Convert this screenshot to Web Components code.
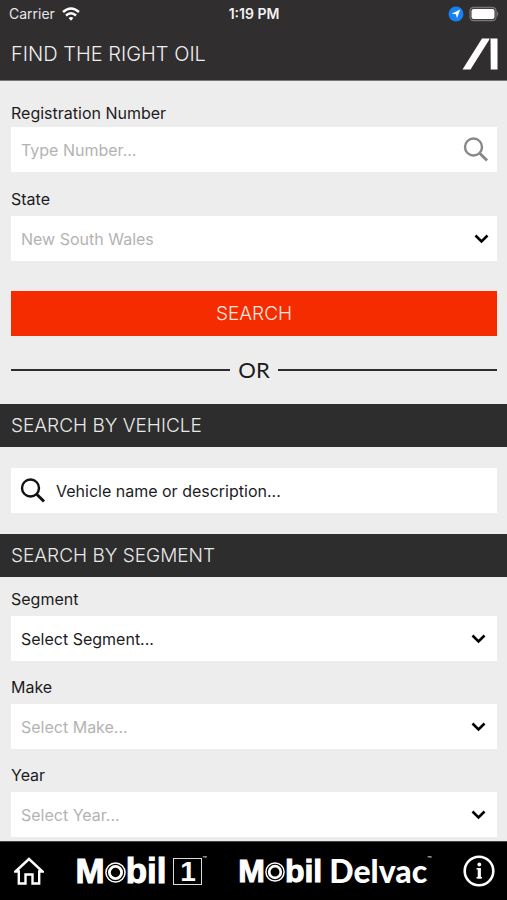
<!DOCTYPE html>
<html lang="en">
<head>
<meta charset="utf-8">
<meta name="viewport" content="width=device-width, initial-scale=1">
<title>Find the right oil</title>
<style>
  body { margin: 0; background: #ededed; color: #1c1c1e; font-family: Inter, "Liberation Sans", sans-serif; font-size: 16px; line-height: 20px; }
</style>
</head>
<body>
<oil-app></oil-app>
<script>
const define = (name, html, setup) => {
  const template = document.createElement('template');
  template.innerHTML = html;
  customElements.define(name, class extends HTMLElement {
    constructor() {
      super();
      this.attachShadow({ mode: 'open' }).append(template.content.cloneNode(true));
    }
    connectedCallback() { if (setup) setup(this, this.shadowRoot); }
  });
};

const lens = `<svg width="26" height="26" viewBox="0 0 26 26" fill="none" stroke="currentColor" aria-hidden="true"><circle cx="10.5" cy="10" r="8.5" stroke-width="2.4"/><path d="M16.7 16.2 L24 23.500" stroke-width="3"/></svg>`;

define('status-bar', `
  <style>
    :host { display: grid; grid-template-columns: 1fr auto 1fr; align-items: center; height: 28px; padding: 0 8px 0 9px; font-size: 14px; color: #e6e6e6; }
    .left, .right { display: flex; align-items: center; gap: 7px; }
    .right { justify-content: flex-end; gap: 5px; }
    time { font-weight: 600; color: #f2f2f2; }
    svg { display: block; }
  </style>
  <span class="left">Carrier
    <svg width="18" height="14" viewBox="0 0 18 14" fill="none" stroke="#fff" stroke-width="2.5" aria-label="Wi-Fi"><path d="M1 5 Q9 -2 17 5"/><path d="M4 8.5 Q9 4 14 8.5"/><path d="M6.6 11 Q9 8.8 11.4 11 L9 13.8Z" fill="#fff" stroke="none"/></svg>
  </span>
  <time>1:19 PM</time>
  <span class="right">
    <svg width="16" height="16" viewBox="0 0 16 16" aria-label="Location"><circle cx="8" cy="8" r="7.5" fill="#1681f5"/><path d="M12.2 3.6 L9 12.2 L7.9 8.2 L3.6 7.7Z" fill="#fff"/></svg>
    <svg width="30" height="16" viewBox="0 0 30 16" aria-label="Battery"><rect x="1" y="1.5" width="26" height="13" rx="3.5" fill="none" stroke="#777" stroke-width="1.3"/><rect x="2.5" y="3" width="23" height="10" rx="2" fill="#fff"/><path d="M28 5.5 Q30.500 8 28 10.500Z" fill="#777"/></svg>
  </span>`);

define('app-header', `
  <style>
    :host { display: block; background: #302e2f; color: #eee; border-bottom: 1px solid #777; }
    .title { display: flex; align-items: center; justify-content: space-between; height: 52px; padding: 0 9px 0 11px; }
    h1 { margin: 0; font-size: 20px; line-height: 24px; font-weight: 300; }
    svg { display: block; }
  </style>
  <status-bar></status-bar>
  <div class="title">
    <h1><slot></slot></h1>
    <svg width="36" height="32" viewBox="0 0 36 32" fill="#fff" aria-label="Logo"><path d="M20 .5 H28 L8.500 31.500 H.500Z M28 .5 H35.500 V31.500 H28.500Z"/><path d="M28 .500V31.500" stroke="#302e2f" stroke-width="1"/></svg>
  </div>`);

define('section-bar', `
  <style>
    :host { display: block; background: #2d2d2d; color: #e8e8e8; padding: 10px 11px 9px; }
    h2 { margin: 0; font-size: 19px; line-height: 24px; font-weight: 300; }
  </style>
  <h2><slot></slot></h2>`);

define('text-field', `
  <style>
    :host { display: flex; flex-direction: column; gap: 4px; }
    .box { display: flex; align-items: center; height: 45px; background: #fff; padding: 0 8px 0 10px; color: #888; gap: 10px; }
    input { flex: 1; min-width: 0; align-self: stretch; border: 0; padding: 0; background: none; font: inherit; color: #1c1c1e; outline-offset: -2px; }
    input::placeholder { color: #b3b3b3; opacity: 1; }
    svg { display: block; }
    :host([leading]) .box { flex-direction: row-reverse; color: #111; padding: 0 9px; }
    :host([leading]) input::placeholder { color: #1c1c1e; }
    :host([leading]) label { display: none; }
  </style>
  <label for="field"></label>
  <div class="box"><input id="field" type="text">${lens}</div>`,
  (host, root) => {
    const input = root.querySelector('input');
    root.querySelector('label').textContent = host.getAttribute('label');
    input.placeholder = host.getAttribute('placeholder');
    if (host.hasAttribute('leading')) input.setAttribute('aria-label', host.getAttribute('label'));
  });

define('select-field', `
  <style>
    :host { display: flex; flex-direction: column; gap: 7px; --end: 11px; }
    .box { display: grid; align-items: center; background: #fff; }
    select, svg { grid-area: 1 / 1; }
    select { appearance: none; width: 100%; height: 45px; border: 0; border-radius: 0; padding: 0 40px 0 10px; background: none; font: inherit; color: #1c1c1e; outline-offset: -2px; }
    :host([muted]) select { color: #b3b3b3; }
    svg { display: block; justify-self: end; margin-right: var(--end); pointer-events: none; }
    :host([wide]) { --end: 8px; }
  </style>
  <label for="choice"></label>
  <div class="box">
    <select id="choice"><option></option></select>
    <svg width="15" height="10" viewBox="0 0 15 10" fill="none" stroke="#000" stroke-width="2.600" aria-hidden="true"><path d="M1.500 1.500 L7.500 7.500 L13.500 1.500"/></svg>
  </div>`,
  (host, root) => {
    root.querySelector('label').textContent = host.getAttribute('label');
    root.querySelector('option').textContent = host.getAttribute('value');
  });

define('action-button', `
  <style>
    :host { display: block; }
    button { display: block; width: 100%; height: 45px; border: 0; padding: 0; background: #f52c00; color: #ffe6df; font: inherit; font-size: 19px; font-weight: 300; cursor: pointer; }
  </style>
  <button type="submit"><slot></slot></button>`);

define('or-divider', `
  <style>
    :host { display: flex; align-items: center; gap: 8px; font-family: Lato, sans-serif; font-size: 22px; line-height: 24px; }
    i { flex: 1; height: 2px; background: #2d2d2d; }
  </style>
  <i></i><slot></slot><i></i>`);

define('mobil-word', `
  <style>
    :host { display: inline-flex; align-items: baseline; font-family: "Liberation Sans", sans-serif; font-weight: 700; font-size: var(--size, 35px); line-height: 34px; -webkit-text-stroke: 1px #fff; }
    svg { display: block; width: var(--ring, 21px); height: var(--ring, 21px); flex: none; }
  </style>
  <span>M</span><svg viewBox="0 0 22 22" fill="none" stroke="#fff" aria-label="o"><circle cx="11" cy="11" r="10" stroke-width="1.600"/><circle cx="11" cy="11" r="6.400" stroke-width="3"/></svg><span>bil</span>`);

define('app-footer', `
  <style>
    :host { display: block; background: #000; color: #fff; border-top: 1px solid #444; }
    nav { display: flex; align-items: center; justify-content: space-between; height: 58px; padding: 0 12px 0 14px; }
    a { display: flex; align-items: center; color: inherit; text-decoration: none; }
    svg { display: block; }
    .one { display: grid; place-items: center; box-sizing: border-box; width: 29px; height: 27px; border: 1px solid #ddd; margin-left: 7px; font: 700 28px/26px "Liberation Sans", sans-serif; }
    .del { --size: 32px; --ring: 20px; }
    .name { font: 900 32px/34px Lato, sans-serif; margin-left: 7px; }
    sup { align-self: flex-start; font-size: 7px; line-height: 12px; }
  </style>
  <nav>
    <a href="#home" aria-label="Home"><svg width="30" height="28" viewBox="0 0 30 28" fill="none" stroke="#fff" stroke-width="2.400"><path d="M1.500 14.500 L15 2 L28.500 14.500 H25.200 V26.500 H18.500 V17.500 H11.500 V26.500 H4.800 V14.500Z"/></svg></a>
    <a href="#mobil1"><mobil-word></mobil-word><span class="one">1</span><sup>™</sup></a>
    <a href="#delvac"><mobil-word class="del"></mobil-word><span class="name">Delvac</span><sup>™</sup></a>
    <a href="#info" aria-label="Information"><svg width="32" height="32" viewBox="0 0 32 32" fill="none" stroke="#fff"><circle cx="16" cy="16" r="14.300" stroke-width="2.600"/><path d="M13.500 13.800 H16.300 V23.500 M13.500 22.800 H19" stroke-width="1.500"/><path d="M16.300 13V23.500" stroke-width="3.200"/><circle cx="16.300" cy="9.500" r="1.900" fill="#fff" stroke="none"/></svg></a>
  </nav>`);

define('oil-app', `
  <style>
    :host { display: flex; flex-direction: column; min-height: 100vh; }
    main { flex: 1; }
    form, .group { display: flex; flex-direction: column; padding: 0 10px 0 11px; }
    form { padding-top: 22px; gap: 17px; }
    action-button { margin-top: 13px; }
    or-divider { margin: 5px 0 22px; }
    .vehicle { padding-top: 21px; padding-bottom: 21px; }
    .segment { padding-top: 12px; padding-bottom: 4px; gap: 16px; }
  </style>
  <app-header>FIND THE RIGHT OIL</app-header>
  <main>
    <form>
      <text-field label="Registration Number" placeholder="Type Number..."></text-field>
      <select-field wide muted label="State" value="New South Wales"></select-field>
      <action-button>SEARCH</action-button>
      <or-divider>OR</or-divider>
    </form>
    <section-bar>SEARCH BY VEHICLE</section-bar>
    <div class="group vehicle">
      <text-field leading label="Vehicle" placeholder="Vehicle name or description..."></text-field>
    </div>
    <section-bar>SEARCH BY SEGMENT</section-bar>
    <div class="group segment">
      <select-field label="Segment" value="Select Segment..."></select-field>
      <select-field muted label="Make" value="Select Make..."></select-field>
      <select-field muted label="Year" value="Select Year..."></select-field>
    </div>
  </main>
  <app-footer></app-footer>`);
</script>
</body>
</html>
